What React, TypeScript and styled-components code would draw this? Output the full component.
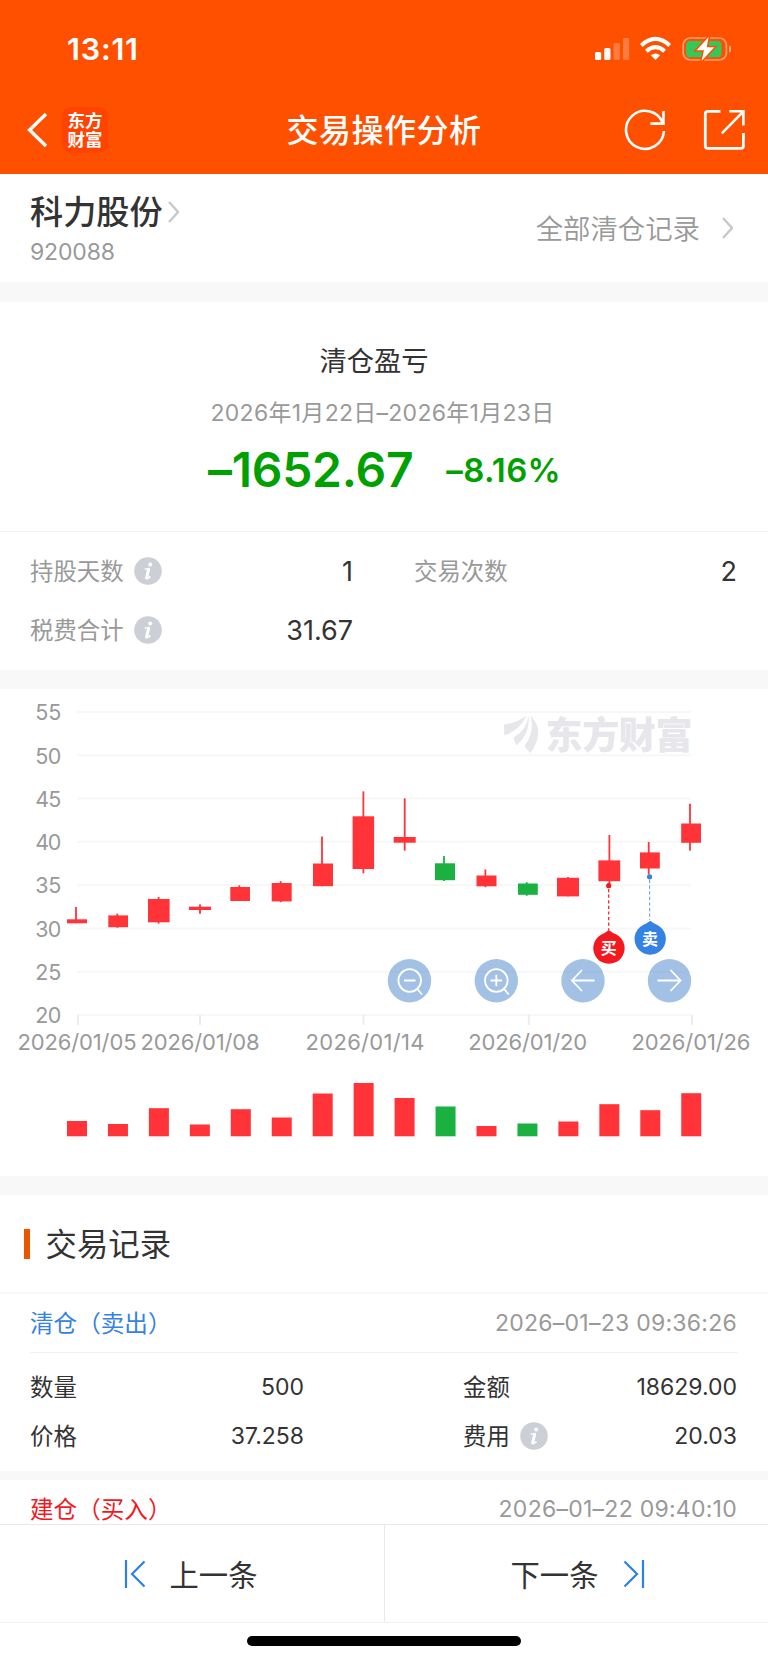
import React from "react";
import styled, { createGlobalStyle } from "styled-components";

const FONT = `Inter, "Noto Sans CJK SC", sans-serif`;

const GlobalStyle = createGlobalStyle`
  * { box-sizing: border-box; }
  body { margin: 0; background: #fff; font-family: ${FONT}; color: #333; }
  svg { display: block; flex: none; }
`;

const Screen = styled.div`
  width: 768px;
  height: 1663px;
  display: flex;
  flex-direction: column;
  overflow: hidden;
  background: #fff;
`;

const Header = styled.header`
  flex: none;
  height: 173.5px;
  background: #ff5000;
  color: #fff;
`;

const StatusBar = styled.div`
  height: 98px;
  padding: 0 37px 0 67px;
  display: flex;
  align-items: center;
  justify-content: space-between;
`;

const Clock = styled.span`
  padding-bottom: 1px;
  font-size: 30.5px;
  font-weight: 600;
  letter-spacing: 0.8px;
`;

const NavBar = styled.nav`
  height: 64px;
  padding: 0 23px 0 27px;
  display: grid;
  grid-template-columns: 1fr auto 1fr;
  align-items: center;
`;

const NavGroup = styled.div<{ $end?: boolean; $gap: number }>`
  display: flex;
  align-items: center;
  justify-content: ${(p) => (p.$end ? "flex-end" : "flex-start")};
  gap: ${(p) => p.$gap}px;
`;

const Brand = styled.div`
  width: 46px;
  height: 46px;
  border-radius: 9px;
  background: #ff4300;
  display: flex;
  flex-direction: column;
  align-items: center;
  justify-content: center;
  font-size: 17.5px;
  line-height: 19px;
  font-weight: 700;
`;

const PageTitle = styled.h1`
  margin: 0;
  padding: 1px 4px 0 0;
  font-size: 32px;
  line-height: 40px;
  font-weight: 500;
  letter-spacing: 0.5px;
`;

const StockBar = styled.section`
  flex: none;
  height: 108.5px;
  padding: 0 35px 0 30px;
  display: flex;
  justify-content: space-between;
`;

const StockName = styled.div`
  margin-top: 18px;
  display: flex;
  align-items: center;
  gap: 5px;
  font-size: 33.2px;
  line-height: 40px;
  font-weight: 500;
`;

const StockCode = styled.div`
  margin-top: 6px;
  font-size: 23px;
  line-height: 28px;
  letter-spacing: -0.15px;
  color: #999;
`;

const AllRecords = styled.div`
  height: 108px;
  display: flex;
  align-items: center;
  gap: 22px;
  color: #999;
  font-size: 27.4px;
  font-weight: 350;
`;

const Raised = styled.span`
  padding-bottom: 2px;
`;

const Band = styled.div<{ $h: number }>`
  flex: none;
  height: ${(p) => p.$h}px;
  background: #f8f8f8;
`;

const Profit = styled.section`
  flex: none;
  height: 229.5px;
  padding-top: 40px;
  display: flex;
  flex-direction: column;
  align-items: center;
  border-bottom: 1px solid #f2f2f2;
`;

const ProfitTitle = styled.div`
  font-size: 27.3px;
  line-height: 40px;
  margin-left: -20px;
`;

const ProfitDates = styled.div`
  margin-top: 15px;
  margin-left: -3px;
  font-size: 23px;
  line-height: 32px;
  letter-spacing: 0.28px;
  color: #999;
`;

const ProfitFigures = styled.div`
  margin-top: 11px;
  margin-left: 1px;
  display: flex;
  align-items: center;
  gap: 33px;
  color: #00a000;
  font-weight: 600;
  line-height: 60px;
`;

const Amount = styled.span`
  font-size: 48px;
  letter-spacing: -0.25px;
`;

const Percent = styled.span`
  font-size: 33px;
  letter-spacing: 0.35px;
`;

const Stats = styled.section`
  flex: none;
  height: 138px;
  padding: 10px 31px 0 30px;
  display: grid;
  grid-template-columns: 323px 323px;
  column-gap: 61px;
  grid-auto-rows: 59px;
`;

const Stat = styled.div`
  display: flex;
  align-items: center;
  justify-content: space-between;
`;

const Label = styled.span<{ $dark?: boolean }>`
  display: flex;
  align-items: center;
  gap: 10px;
  font-size: 23.4px;
  color: ${(p) => (p.$dark ? "#333" : "#999")};
`;

const StatValue = styled.span`
  padding-top: 1px;
  font-size: 27px;
`;

const ChartPanel = styled.section`
  flex: none;
  height: 486.5px;
`;

const RecordsTitle = styled.h2`
  flex: none;
  margin: 0;
  height: 99px;
  padding-left: 23.5px;
  border-bottom: 2px solid #f8f8f8;
  display: flex;
  align-items: center;
  gap: 15.5px;
  font-size: 31.4px;
  font-weight: 400;
`;

const Accent = styled.i`
  width: 6.5px;
  height: 30px;
  background: #eb5500;
`;

const RecordList = styled.div`
  flex: 1;
  min-height: 0;
  overflow: hidden;
`;

const RecordHead = styled.div<{ $tone: string }>`
  margin: 0 30px;
  height: 58.5px;
  padding-right: 1px;
  display: flex;
  align-items: center;
  justify-content: space-between;
  border-bottom: 1px solid #f2f2f2;
  font-size: 23.6px;
  color: ${(p) => p.$tone};
`;

const RecordTime = styled.time`
  font-size: 23px;
  letter-spacing: 0.26px;
  color: #999;
`;

const RecordBody = styled.div`
  height: 118px;
  padding: 10px 31px 0 30px;
  display: grid;
  grid-template-columns: 274px 274px;
  column-gap: 159px;
  grid-auto-rows: 49px;
`;

const RecordValue = styled.span`
  font-size: 23px;
`;

const Footer = styled.footer`
  flex: none;
  height: 139px;
  background: #fff;
`;

const Pager = styled.div`
  height: 99px;
  display: grid;
  grid-template-columns: 1fr 1fr;
  border-top: 1px solid #e9e9e9;
  border-bottom: 1px solid #f2f2f2;
`;

const PagerButton = styled.div<{ $next?: boolean }>`
  display: flex;
  align-items: center;
  justify-content: center;
  gap: ${(p) => (p.$next ? 25 : 24)}px;
  padding-right: ${(p) => (p.$next ? 0 : 3)}px;
  padding-left: ${(p) => (p.$next ? 3 : 0)}px;
  font-size: 29.3px;
  border-left: ${(p) => (p.$next ? "1px solid #e9e9e9" : "0")};
`;

const HomeIndicator = styled.div`
  margin: 13px auto 0;
  width: 274px;
  height: 10px;
  border-radius: 5px;
  background: #000;
`;

const Chevron = ({ w = 11, h = 22 }) => (
  <svg width={w} height={h} viewBox="0 0 11 22" fill="none" stroke="#c8c8c8" strokeWidth="2.4">
    <path d="M1 1 L10 11 L1 21" />
  </svg>
);

const Info = () => (
  <svg width="28" height="28" viewBox="0 0 28 28">
    <circle cx="14" cy="14" r="13.8" fill="#cccfd5" />
    <circle cx="16.2" cy="7.4" r="2" fill="#fff" />
    <path d="M11.2 12 H14.8 L12.4 20.6 Q12.4 22.4 16 20" fill="none" stroke="#fff" strokeWidth="1.6" strokeLinejoin="round" strokeLinecap="round" />
    <path d="M14.7 12.2 L12.6 21" stroke="#fff" strokeWidth="3" strokeLinecap="round" />
  </svg>
);

const StatusIcons = () => (
  <svg width="137" height="26" viewBox="594 36 137 26">
    <g fill="#fff">
      <rect x="595" y="52" width="6.2" height="8" rx="1.6" />
      <rect x="604.3" y="48" width="6.2" height="12" rx="1.6" />
      <rect x="613.6" y="43" width="6.2" height="17" rx="1.6" opacity=".25" />
      <rect x="623" y="38" width="6.2" height="22" rx="1.6" opacity=".25" />
      <path d="M655.5 60 L650.8 55.2 Q655.5 51.6 660.2 55.2 Z" />
    </g>
    <g fill="none" stroke="#fff" strokeWidth="4">
      <path d="M641.3 45.4 Q655.5 32.5 669.7 45.4" />
      <path d="M646.4 51.2 Q655.5 43.2 664.6 51.2" />
    </g>
    <rect x="683.2" y="38" width="43.2" height="22" rx="7" fill="none" stroke="#fff" strokeOpacity=".45" strokeWidth="1.7" />
    <path d="M729 45.5 Q731.7 46.5 731.7 49 Q731.7 51.5 729 52.5 Z" fill="#fff" opacity=".5" />
    <rect x="686" y="41" width="35.6" height="16.2" rx="4" fill="#35c759" />
    <path d="M708.6 37 L696.5 50.3 H704 L701.5 61 L714.3 47.3 H706.8 Z" fill="#fff" stroke="#ff5000" strokeWidth="3" paintOrder="stroke" />
  </svg>
);

const BackIcon = () => (
  <svg width="21" height="36" viewBox="0 0 21 36" fill="none" stroke="#fff" strokeWidth="3.4">
    <path d="M19 2 L2.6 18 L19 34" />
  </svg>
);

const RefreshIcon = () => (
  <svg width="42" height="42" viewBox="0 0 42 42" fill="none" stroke="#fff" strokeWidth="2.6">
    <path d="M40 22 A19 19 0 1 1 38.6 13.6" />
    <path d="M39.5 2 V14.6 H26.4" />
  </svg>
);

const ShareIcon = () => (
  <svg width="42" height="42" viewBox="0 0 42 42" fill="none" stroke="#fff" strokeWidth="2.6">
    <path d="M17.5 2.3 H5 Q2.3 2.3 2.3 5 V37 Q2.3 39.4 5 39.4 H38 Q40.4 39.4 40.4 37 V24" strokeWidth="2.8" />
    <path d="M26.3 2.3 H40.4 V16.6 M40 2.8 L18.8 24.4" />
  </svg>
);

const PrevIcon = () => (
  <svg width="22" height="28" viewBox="0 0 22 28" fill="none" stroke="#2b80ea" strokeWidth="2.2">
    <path d="M2 0 V28 M20.5 1.5 L8 14 L20.5 26.5" />
  </svg>
);

const NextIcon = () => (
  <svg width="22" height="28" viewBox="0 0 22 28" fill="none" stroke="#2b80ea" strokeWidth="2.2">
    <path d="M20 0 V28 M1.5 1.5 L14 14 L1.5 26.5" />
  </svg>
);

const RED = "#ff3338";
const GREEN = "#1ab141";
const CHART_TOP = 689;

type Bar = { x: number; w: number; high: number; top: number; bottom: number; low: number; vol: number; down?: boolean };

const bars: Bar[] = [
  { x: 67, w: 20, high: 907, top: 919.3, bottom: 923.3, low: 923.3, vol: 1121 },
  { x: 108.3, w: 19.7, high: 913.6, top: 915.4, bottom: 927.2, low: 927.8, vol: 1124 },
  { x: 148, w: 21.6, high: 897, top: 899, bottom: 922.3, low: 923.6, vol: 1108.2 },
  { x: 189, w: 22, high: 904.4, top: 906.7, bottom: 910, low: 913.8, vol: 1124.5 },
  { x: 230.3, w: 19.7, high: 885.3, top: 887, bottom: 901, low: 901, vol: 1109.2 },
  { x: 271.7, w: 20, high: 881.2, top: 883, bottom: 901.4, low: 902.2, vol: 1117.5 },
  { x: 313, w: 20, high: 836.5, top: 863.5, bottom: 886.2, low: 886.2, vol: 1093.5 },
  { x: 352.6, w: 21.5, high: 791.4, top: 816.3, bottom: 869, low: 873.3, vol: 1083 },
  { x: 393.7, w: 22, high: 798.3, top: 837, bottom: 842.7, low: 850.6, vol: 1098 },
  { x: 435, w: 20, high: 856, top: 863.3, bottom: 880.2, low: 881, vol: 1106.5, down: true },
  { x: 476.5, w: 20, high: 869.5, top: 875.5, bottom: 886.3, low: 887.2, vol: 1126 },
  { x: 518, w: 19.8, high: 882.2, top: 883.5, bottom: 894.8, low: 895.8, vol: 1123.5, down: true },
  { x: 557, w: 22, high: 877, top: 877.8, bottom: 896.4, low: 896.4, vol: 1121.5 },
  { x: 598.4, w: 21.8, high: 835, top: 860.4, bottom: 881.2, low: 884, vol: 1104.2 },
  { x: 640, w: 19.8, high: 842, top: 852.4, bottom: 868.5, low: 874.5, vol: 1110.2 },
  { x: 681.2, w: 19.8, high: 803.7, top: 823.5, bottom: 842.8, low: 850.6, vol: 1093.2 },
];

const wickX = [76, 117.3, 158.6, 200, 239.3, 280.7, 322, 363.4, 404.7, 444, 485.4, 526.7, 568, 609.4, 648.7, 690];
const levels = [55, 50, 45, 40, 35, 30, 25, 20];
const dates: [number, string][] = [
  [77, "2026/01/05"],
  [200, "2026/01/08"],
  [365, "2026/01/14"],
  [527.7, "2026/01/20"],
  [691, "2026/01/26"],
];
const ticks = [78, 200, 363.5, 528.8, 692];

const Chart = () => (
  <svg width="768" height="486" viewBox={`0 ${CHART_TOP} 768 486`} fontFamily={FONT}>
    <g stroke="#f7f7f7" strokeWidth="2">
      {levels.map((v, i) => (
        <path key={v} d={`M77 ${712 + i * 43.28} H691`} />
      ))}
    </g>
    <g stroke="#ececec" strokeWidth="2">
      {ticks.map((x) => (
        <path key={x} d={`M${x} 1015 V1025`} />
      ))}
    </g>
    <g fill="#999" fontSize="21.5">
      {levels.map((v, i) => (
        <text key={v} x="35.3" y={720.3 + i * 43.28} textLength="26" lengthAdjust="spacing">
          {v}
        </text>
      ))}
      {dates.map(([x, t]) => (
        <text key={t} x={x - 59.5} y="1050" textLength="119" fontSize="22">
          {t}
        </text>
      ))}
    </g>
    <g fill="#e6e6eb">
      <path d="M504 724.5 Q517 723 526.5 715.5 Q519 731 504.5 735.5 Q503.5 730 504 724.5 Z" />
      <path d="M528.5 715.5 Q530.5 733 516.5 745.5 Q514.5 742 513.5 737.5 Q527 730 528.5 715.5 Z" />
      <path d="M530.5 715.5 Q546 731 530.5 753 Q526 749 524.5 746 Q535 732 530.5 715.5 Z" />
      <text x="545.5" y="748.5" fontSize="37" fontWeight="900" textLength="147">
        东方财富
      </text>
    </g>
    {bars.map((b, i) => (
      <g key={i} fill={b.down ? GREEN : RED}>
        <rect x={wickX[i] - 0.9} y={b.high} width="1.8" height={b.low - b.high} />
        <rect x={b.x} y={b.top} width={b.w} height={b.bottom - b.top} />
        <rect x={67 + i * 40.95} y={b.vol} width="20" height={1136.3 - b.vol} />
      </g>
    ))}
    <g fill="#f3191f">
      <circle cx="608.7" cy="885.7" r="2.6" />
      <path d="M608.7 889 V930" stroke="#f3191f" strokeWidth="1.2" strokeDasharray="3.2 2.4" />
      <path d="M608.8 930 Q612.5 933.2 616.5 934.4 A15.7 15.7 0 1 1 601.4 934.4 Q605 933.2 608.8 930 Z" />
    </g>
    <g fill="#3482e4">
      <circle cx="649.6" cy="876.8" r="2.6" />
      <path d="M649.6 880 V920" stroke="#3482e4" strokeOpacity=".7" strokeWidth="1.2" strokeDasharray="3.2 2.4" />
      <path d="M650.2 920.8 Q654 924 657.8 925.2 A15.7 15.7 0 1 1 642.6 925.2 Q646.5 924 650.2 920.8 Z" />
    </g>
    <g fill="#fff" fontSize="16" fontWeight="700" textAnchor="middle">
      <text x="608.7" y="954">买</text>
      <text x="650" y="945">卖</text>
    </g>
    <g fill="#4784ca" fillOpacity=".5">
      {[409.5, 496.3, 583, 669.5].map((x) => (
        <circle key={x} cx={x} cy="980.7" r="21.7" />
      ))}
    </g>
    <g fill="none" stroke="#fff" strokeWidth="1.8">
      <path d="M404 980.5 H415.5 M416.5 988 L422 994.5" />
      <circle cx="409.7" cy="980.5" r="11.3" />
      <path d="M490.5 980.5 H502 M496.3 974.7 V986.3 M503.3 988 L508.8 994.5" />
      <circle cx="496.3" cy="980.5" r="11.3" />
      <path d="M594.5 980.5 H572.5 M582 970 L572 980.5 L582 991" />
      <path d="M657.5 980.5 H680 M670.5 970 L680.5 980.5 L670.5 991" />
    </g>
  </svg>
);

export default function App() {
  return (
    <Screen>
      <GlobalStyle />
      <Header>
        <StatusBar>
          <Clock>13:11</Clock>
          <StatusIcons />
        </StatusBar>
        <NavBar>
          <NavGroup $gap={14}>
            <BackIcon />
            <Brand>
              <span>东方</span>
              <span>财富</span>
            </Brand>
          </NavGroup>
          <PageTitle>交易操作分析</PageTitle>
          <NavGroup $end $gap={37}>
            <RefreshIcon />
            <ShareIcon />
          </NavGroup>
        </NavBar>
      </Header>

      <StockBar>
        <div>
          <StockName>
            科力股份
            <Chevron />
          </StockName>
          <StockCode>920088</StockCode>
        </div>
        <AllRecords>
          <Raised>全部清仓记录</Raised>
          <Chevron />
        </AllRecords>
      </StockBar>
      <Band $h={20} />

      <Profit>
        <ProfitTitle>清仓盈亏</ProfitTitle>
        <ProfitDates>2026年1月22日–2026年1月23日</ProfitDates>
        <ProfitFigures>
          <Amount>–1652.67</Amount>
          <Percent>–8.16%</Percent>
        </ProfitFigures>
      </Profit>

      <Stats>
        <Stat>
          <Label><Raised>持股天数</Raised><Info /></Label>
          <StatValue>1</StatValue>
        </Stat>
        <Stat>
          <Label><Raised>交易次数</Raised></Label>
          <StatValue>2</StatValue>
        </Stat>
        <Stat>
          <Label><Raised>税费合计</Raised><Info /></Label>
          <StatValue>31.67</StatValue>
        </Stat>
      </Stats>
      <Band $h={19.5} />

      <ChartPanel>
        <Chart />
      </ChartPanel>
      <Band $h={19.5} />

      <RecordsTitle>
        <Accent />
        <Raised>交易记录</Raised>
      </RecordsTitle>
      <RecordList>
        <RecordHead $tone="#3482e4">
          <Raised>清仓（卖出）</Raised>
          <RecordTime>2026–01–23 09:36:26</RecordTime>
        </RecordHead>
        <RecordBody>
          <Stat>
            <Label $dark><Raised>数量</Raised></Label>
            <RecordValue>500</RecordValue>
          </Stat>
          <Stat>
            <Label $dark><Raised>金额</Raised></Label>
            <RecordValue>18629.00</RecordValue>
          </Stat>
          <Stat>
            <Label $dark><Raised>价格</Raised></Label>
            <RecordValue>37.258</RecordValue>
          </Stat>
          <Stat>
            <Label $dark><Raised>费用</Raised><Info /></Label>
            <RecordValue>20.03</RecordValue>
          </Stat>
        </RecordBody>
        <Band $h={9.5} />
        <RecordHead $tone="#f3191f">
          <Raised>建仓（买入）</Raised>
          <RecordTime>2026–01–22 09:40:10</RecordTime>
        </RecordHead>
      </RecordList>

      <Footer>
        <Pager>
          <PagerButton>
            <PrevIcon />
            <Raised>上一条</Raised>
          </PagerButton>
          <PagerButton $next>
            <Raised>下一条</Raised>
            <NextIcon />
          </PagerButton>
        </Pager>
        <HomeIndicator />
      </Footer>
    </Screen>
  );
}
